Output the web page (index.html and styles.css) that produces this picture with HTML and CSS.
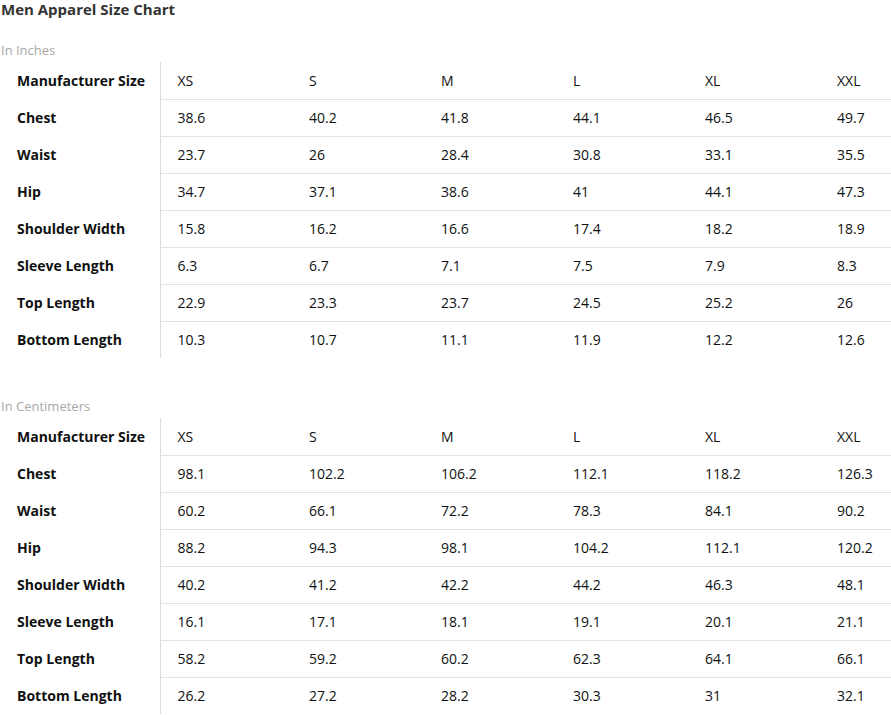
FILE: index.html
```html
<!DOCTYPE html>
<html lang="en">
<head>
<meta charset="utf-8">
<title>Men Apparel Size Chart</title>
<link rel="stylesheet" href="styles.css">
</head>
<body>
<h1 class="title">Men Apparel Size Chart</h1>

<section class="chart chart-first">
  <div class="unit">In Inches</div>
  <table class="sizes">
    <colgroup><col class="c-label"><col class="c-val"><col class="c-val"><col class="c-val"><col class="c-val"><col class="c-val"><col class="c-last"></colgroup>
    <tr class="head"><th>Manufacturer Size</th><td>XS</td><td>S</td><td>M</td><td>L</td><td>XL</td><td>XXL</td></tr>
    <tr><th>Chest</th><td>38.6</td><td>40.2</td><td>41.8</td><td>44.1</td><td>46.5</td><td>49.7</td></tr>
    <tr><th>Waist</th><td>23.7</td><td>26</td><td>28.4</td><td>30.8</td><td>33.1</td><td>35.5</td></tr>
    <tr><th>Hip</th><td>34.7</td><td>37.1</td><td>38.6</td><td>41</td><td>44.1</td><td>47.3</td></tr>
    <tr><th>Shoulder Width</th><td>15.8</td><td>16.2</td><td>16.6</td><td>17.4</td><td>18.2</td><td>18.9</td></tr>
    <tr><th>Sleeve Length</th><td>6.3</td><td>6.7</td><td>7.1</td><td>7.5</td><td>7.9</td><td>8.3</td></tr>
    <tr><th>Top Length</th><td>22.9</td><td>23.3</td><td>23.7</td><td>24.5</td><td>25.2</td><td>26</td></tr>
    <tr><th>Bottom Length</th><td>10.3</td><td>10.7</td><td>11.1</td><td>11.9</td><td>12.2</td><td>12.6</td></tr>
  </table>
</section>

<section class="chart chart-second">
  <div class="unit">In Centimeters</div>
  <table class="sizes">
    <colgroup><col class="c-label"><col class="c-val"><col class="c-val"><col class="c-val"><col class="c-val"><col class="c-val"><col class="c-last"></colgroup>
    <tr class="head"><th>Manufacturer Size</th><td>XS</td><td>S</td><td>M</td><td>L</td><td>XL</td><td>XXL</td></tr>
    <tr><th>Chest</th><td>98.1</td><td>102.2</td><td>106.2</td><td>112.1</td><td>118.2</td><td>126.3</td></tr>
    <tr><th>Waist</th><td>60.2</td><td>66.1</td><td>72.2</td><td>78.3</td><td>84.1</td><td>90.2</td></tr>
    <tr><th>Hip</th><td>88.2</td><td>94.3</td><td>98.1</td><td>104.2</td><td>112.1</td><td>120.2</td></tr>
    <tr><th>Shoulder Width</th><td>40.2</td><td>41.2</td><td>42.2</td><td>44.2</td><td>46.3</td><td>48.1</td></tr>
    <tr><th>Sleeve Length</th><td>16.1</td><td>17.1</td><td>18.1</td><td>19.1</td><td>20.1</td><td>21.1</td></tr>
    <tr><th>Top Length</th><td>58.2</td><td>59.2</td><td>60.2</td><td>62.3</td><td>64.1</td><td>66.1</td></tr>
    <tr><th>Bottom Length</th><td>26.2</td><td>27.2</td><td>28.2</td><td>30.3</td><td>31</td><td>32.1</td></tr>
  </table>
</section>
</body>
</html>
```
FILE: styles.css
```css
html, body {
  margin: 0;
  padding: 0;
  background: #fff;
  overflow: hidden;
}
body {
  font-family: "Open Sans", "Noto Sans", "Liberation Sans", sans-serif;
  color: #0f1111;
  padding-left: 1px;
}
.title {
  margin: 0;
  font-size: 15px;
  line-height: 18px;
  font-weight: 700;
  color: #333;
}
.chart-first {
  margin-top: 20px;
}
.chart-second {
  margin-top: 36px;
}
.unit {
  font-size: 13px;
  line-height: 24px;
  color: #a8a8a8;
}
.sizes {
  border-collapse: collapse;
  table-layout: fixed;
  width: 891px;
  margin-left: -1px;
  font-size: 14px;
}
.c-label { width: 160px; }
.c-val { width: 132px; }
.c-last { width: 71px; }
.sizes th,
.sizes td {
  padding: 0 0 0 17px;
  height: 36px;
  line-height: 20px;
  text-align: left;
  white-space: nowrap;
  overflow: hidden;
  vertical-align: middle;
}
.sizes th {
  font-weight: 700;
}
.sizes td {
  border-bottom: 1px solid #e3e3e3;
}
.sizes tr:last-child td {
  border-bottom: none;
}
.sizes tr.head th,
.sizes tr.head td {
  height: 37px;
}
.sizes td:nth-child(2) {
  border-left: 1px solid #dcdcdc;
}
```
